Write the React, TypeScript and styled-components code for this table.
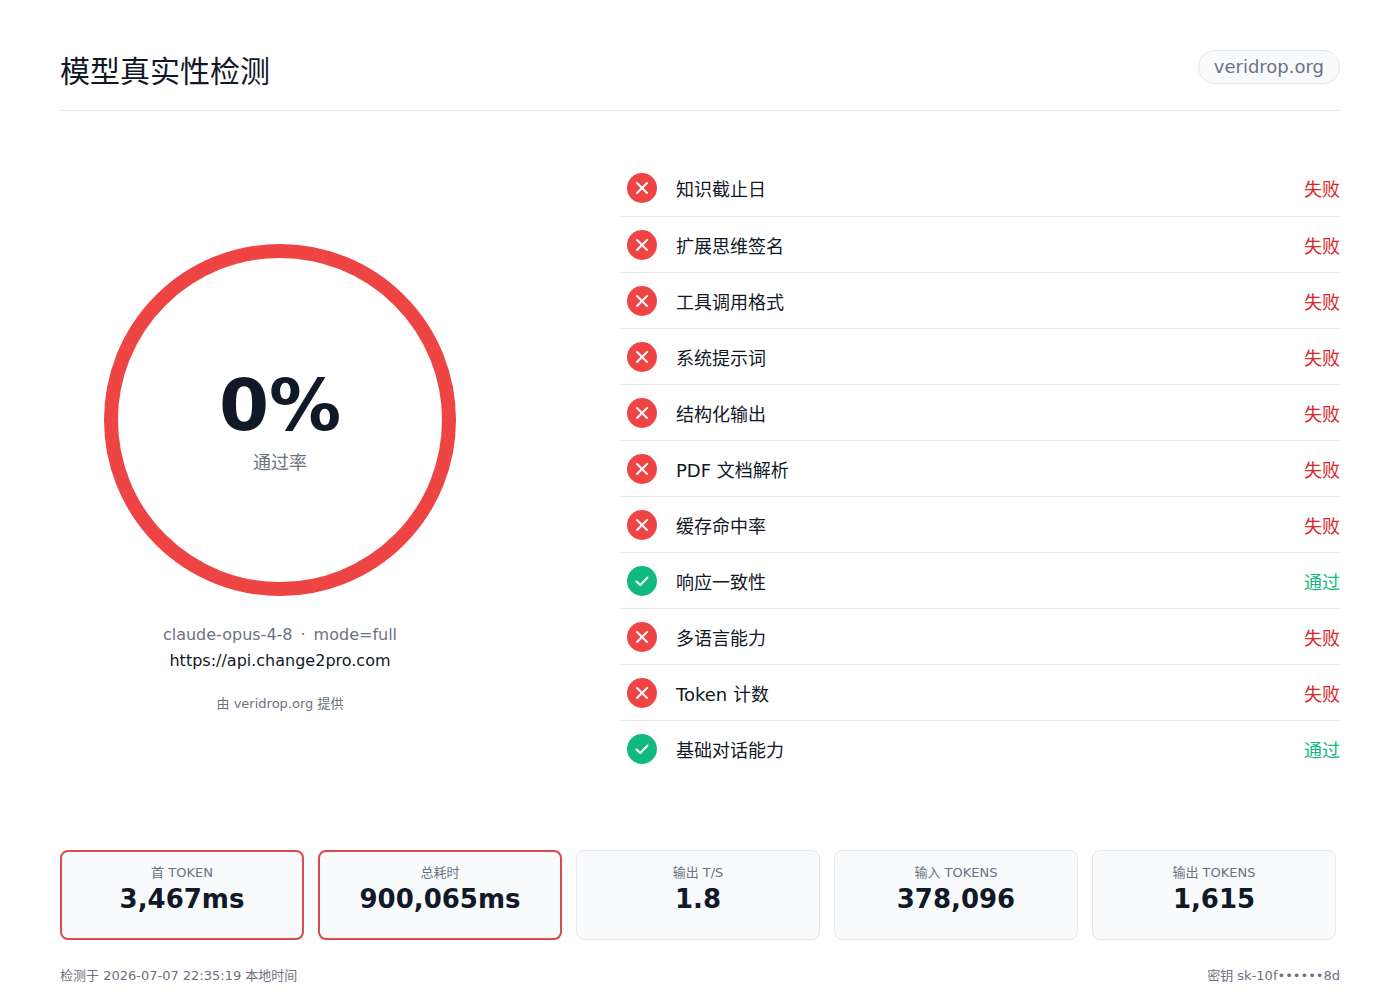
import React from "react";
import styled, { createGlobalStyle } from "styled-components";

const GlobalStyle = createGlobalStyle`
  html, body {
    margin: 0;
    padding: 0;
    background: #ffffff;
  }
  body {
    font-family: "DejaVu Sans", "Noto Sans CJK SC", sans-serif;
    color: #111827;
  }
`;

// Layout
const Page = styled.div`
  box-sizing: border-box;
  width: 1400px;
  padding: 50px 60px 0 60px;
`;
const Header = styled.header`
  display: flex;
  justify-content: space-between;
  align-items: flex-start;
  padding-bottom: 16px;
  border-bottom: 1px solid #e5e7eb;
`;
const Title = styled.h1`
  margin: 0;
  font-size: 30px;
  line-height: 44px;
  font-weight: 400;
  color: #111827;
`;
const Pill = styled.div`
  box-sizing: border-box;
  height: 34px;
  padding: 0 15px;
  border: 1px solid #e5e7eb;
  border-radius: 999px;
  background: #f8fafc;
  color: #6b7280;
  font-size: 18px;
  line-height: 32px;
`;
const Main = styled.main`
  display: grid;
  grid-template-columns: 440px 1fr;
  column-gap: 120px;
  margin-top: 48px;
`;

// Left: score
const ScoreColumn = styled.section`
  display: flex;
  flex-direction: column;
  align-items: center;
  padding-top: 85px;
`;
const Ring = styled.div<{ $color: string }>`
  box-sizing: border-box;
  width: 352px;
  height: 352px;
  border-radius: 50%;
  border: 14px solid ${(p) => p.$color};
  display: flex;
  flex-direction: column;
  align-items: center;
  justify-content: center;
`;
const Percent = styled.div`
  font-size: 72px;
  line-height: 80px;
  font-weight: 700;
  color: #111827;
`;
const PercentLabel = styled.div`
  margin-top: 6px;
  font-size: 18px;
  line-height: 24px;
  color: #6b7280;
`;
const MetaLine = styled.div`
  margin-top: 28px;
  font-size: 16px;
  line-height: 22px;
  color: #6b7280;
`;
const Dot = styled.span`
  margin: 0 8px;
`;
const Endpoint = styled.div`
  margin-top: 4px;
  font-size: 16px;
  line-height: 22px;
  color: #111827;
`;
const Powered = styled.div`
  margin-top: 23px;
  font-size: 13px;
  line-height: 18px;
  color: #6b7280;
`;

// Right: checks
const CheckList = styled.ul`
  list-style: none;
  margin: 0;
  padding: 0;
`;
const CheckRow = styled.li`
  display: flex;
  align-items: center;
  height: 56px;
  padding-left: 7px;
  box-sizing: border-box;
  & + & {
    border-top: 1px solid #e5e7eb;
  }
  &:first-child {
    height: 57px;
  }
`;
const CheckName = styled.span`
  flex: 1;
  margin-left: 19px;
  font-size: 18px;
  color: #111827;
`;
const CheckStatus = styled.span<{ $ok: boolean }>`
  font-size: 18px;
  color: ${(p) => (p.$ok ? "#10b981" : "#dc2626")};
`;

// Stats
const Stats = styled.div`
  display: grid;
  grid-template-columns: repeat(5, 244px);
  column-gap: 14px;
  margin-top: 74px;
`;
const StatCard = styled.div<{ $alert?: boolean }>`
  box-sizing: border-box;
  height: 90px;
  padding-top: ${(p) => (p.$alert ? "12px" : "13px")};
  border: ${(p) => (p.$alert ? "2px solid #dd4a4a" : "1px solid #e5e7eb")};
  border-radius: 8px;
  background: #f8fafc;
  text-align: center;
`;
const StatLabel = styled.div`
  font-size: 13px;
  line-height: 18px;
  color: #6b7280;
  text-transform: uppercase;
`;
const StatValue = styled.div`
  font-size: 26px;
  line-height: 34px;
  font-weight: 700;
  color: #111827;
`;
const Footer = styled.footer`
  display: flex;
  justify-content: space-between;
  margin-top: 27px;
  font-size: 13px;
  line-height: 18px;
  color: #6b7280;
`;

const StatusIcon = ({ ok }: { ok: boolean }) => (
  <svg width="30" height="30" viewBox="0 0 30 30">
    <circle cx="15" cy="15" r="15" fill={ok ? "#10b981" : "#ef4444"} />
    {ok ? (
      <path
        d="M9.5 15.5l3.8 3.6 7.2-7.6"
        fill="none"
        stroke="#fff"
        strokeWidth="2"
        strokeLinecap="round"
        strokeLinejoin="round"
      />
    ) : (
      <path
        d="M10 10l10 10M20 10l-10 10"
        fill="none"
        stroke="#fff"
        strokeWidth="2"
        strokeLinecap="round"
      />
    )}
  </svg>
);

const checks = [
  { name: "知识截止日", ok: false },
  { name: "扩展思维签名", ok: false },
  { name: "工具调用格式", ok: false },
  { name: "系统提示词", ok: false },
  { name: "结构化输出", ok: false },
  { name: "PDF 文档解析", ok: false },
  { name: "缓存命中率", ok: false },
  { name: "响应一致性", ok: true },
  { name: "多语言能力", ok: false },
  { name: "Token 计数", ok: false },
  { name: "基础对话能力", ok: true },
];

const stats = [
  { label: "首 Token", value: "3,467ms", alert: true },
  { label: "总耗时", value: "900,065ms", alert: true },
  { label: "输出 T/S", value: "1.8", alert: false },
  { label: "输入 Tokens", value: "378,096", alert: false },
  { label: "输出 Tokens", value: "1,615", alert: false },
];

const App = () => {
  const score = 0;
  return (
    <Page>
      <GlobalStyle />
      <Header>
        <Title>模型真实性检测</Title>
        <Pill>veridrop.org</Pill>
      </Header>
      <Main>
        <ScoreColumn>
          <Ring $color="#ef4444">
            <Percent>{score}%</Percent>
            <PercentLabel>通过率</PercentLabel>
          </Ring>
          <MetaLine>
            claude-opus-4-8<Dot>·</Dot>mode=full
          </MetaLine>
          <Endpoint>https://api.change2pro.com</Endpoint>
          <Powered>由 veridrop.org 提供</Powered>
        </ScoreColumn>
        <CheckList>
          {checks.map((c) => (
            <CheckRow key={c.name}>
              <StatusIcon ok={c.ok} />
              <CheckName>{c.name}</CheckName>
              <CheckStatus $ok={c.ok}>{c.ok ? "通过" : "失败"}</CheckStatus>
            </CheckRow>
          ))}
        </CheckList>
      </Main>
      <Stats>
        {stats.map((s) => (
          <StatCard key={s.label} $alert={s.alert}>
            <StatLabel>{s.label}</StatLabel>
            <StatValue>{s.value}</StatValue>
          </StatCard>
        ))}
      </Stats>
      <Footer>
        <span>检测于 2026-07-07 22:35:19 本地时间</span>
        <span>密钥 sk-10f••••••8d</span>
      </Footer>
    </Page>
  );
};

export default App;
